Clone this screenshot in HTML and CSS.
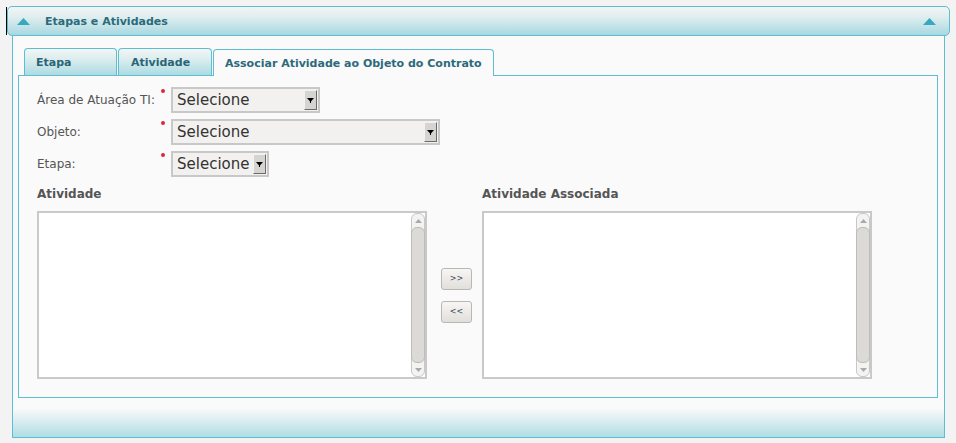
FILE: index.html
```html
<!DOCTYPE html>
<html lang="pt">
<head>
<meta charset="utf-8">
<title>Etapas e Atividades</title>
<link rel="stylesheet" href="styles.css">
</head>
<body>
<div class="page">
  <div class="head-row">
    <span class="caret"></span>
    <div class="header">
      <svg class="tri" width="13" height="7" viewBox="0 0 13 7"><polygon points="0,7 6.5,0 13,7" fill="#38a8be"/></svg>
      <span class="title">Etapas e Atividades</span>
      <svg class="tri" width="13" height="7" viewBox="0 0 13 7"><polygon points="0,7 6.5,0 13,7" fill="#38a8be"/></svg>
    </div>
  </div>
  <div class="panel">
    <div class="tabs">
      <div class="tab tab-1">Etapa</div>
      <div class="tab tab-2">Atividade</div>
      <div class="tab active">Associar Atividade ao Objeto do Contrato</div>
    </div>
    <div class="tabpanel">
      <div class="row">
        <span class="lbl">Área de Atuação TI:</span><span class="req"></span>
        <div class="sel w1"><span class="sel-text">Selecione</span><span class="sel-btn"><svg width="7" height="5" viewBox="0 0 7 5"><polygon points="0,0 7,0 3.5,4" fill="#000"/><rect x="3" y="3" width="1" height="2" fill="#000"/></svg></span></div>
      </div>
      <div class="row">
        <span class="lbl">Objeto:</span><span class="req"></span>
        <div class="sel w2"><span class="sel-text">Selecione</span><span class="sel-btn"><svg width="7" height="5" viewBox="0 0 7 5"><polygon points="0,0 7,0 3.5,4" fill="#000"/><rect x="3" y="3" width="1" height="2" fill="#000"/></svg></span></div>
      </div>
      <div class="row">
        <span class="lbl">Etapa:</span><span class="req"></span>
        <div class="sel w3"><span class="sel-text">Selecione</span><span class="sel-btn"><svg width="7" height="5" viewBox="0 0 7 5"><polygon points="0,0 7,0 3.5,4" fill="#000"/><rect x="3" y="3" width="1" height="2" fill="#000"/></svg></span></div>
      </div>
      <div class="lists">
        <div class="list-title">Atividade</div>
        <div></div>
        <div class="list-title">Atividade Associada</div>
        <div class="listbox">
          <div class="sb">
            <div class="sb-end"><svg width="7" height="4" viewBox="0 0 7 4"><polygon points="0,4 3.5,0 7,4" fill="#a9a9a9"/></svg></div>
            <div class="sb-thumb"></div>
            <div class="sb-end"><svg width="7" height="4" viewBox="0 0 7 4"><polygon points="0,0 7,0 3.5,4" fill="#a9a9a9"/></svg></div>
          </div>
        </div>
        <div class="moves">
          <button class="mv" type="button">&gt;&gt;</button>
          <button class="mv" type="button">&lt;&lt;</button>
        </div>
        <div class="listbox">
          <div class="sb">
            <div class="sb-end"><svg width="7" height="4" viewBox="0 0 7 4"><polygon points="0,4 3.5,0 7,4" fill="#a9a9a9"/></svg></div>
            <div class="sb-thumb"></div>
            <div class="sb-end"><svg width="7" height="4" viewBox="0 0 7 4"><polygon points="0,0 7,0 3.5,4" fill="#a9a9a9"/></svg></div>
          </div>
        </div>
      </div>
    </div>
  </div>
</div>
</body>
</html>
```
FILE: styles.css
```css
body {
  margin: 0;
  background: #f3f3f3;
  font-family: "DejaVu Sans", "Liberation Sans", sans-serif;
}

.page {
  width: 956px;
  padding-top: 6px;
}

.head-row {
  display: flex;
  margin-left: 6px;
  height: 30px;
}

.caret {
  width: 1px;
  background: #000;
  margin: 1px 0;
}

.header {
  width: 943px;
  box-sizing: border-box;
  border: 1px solid #5bbfd1;
  border-radius: 5px;
  background: linear-gradient(#f3f4f4, #e0eeef 35%, #a7d8e1);
  display: flex;
  align-items: center;
  padding: 0 13px 0 9px;
}

.tri {
  display: block;
  margin-top: 1px;
}

.title {
  flex: 1;
  margin-left: 15px;
  font-size: 11px;
  font-weight: bold;
  color: #2c6a7a;
}

.panel {
  margin-left: 12px;
  width: 933px;
  height: 402px;
  box-sizing: border-box;
  border: 1px solid #5bbfd1;
  border-top: none;
  background: linear-gradient(to bottom, #fafafa 0, #fafafa 372px, #b0dde5 100%);
  padding: 12px 6px 0 5px;
}

.tabs {
  display: flex;
  align-items: flex-start;
  gap: 1px;
  height: 28px;
  margin-bottom: -1px;
  padding-left: 6px;
  position: relative;
  z-index: 1;
}

.tab {
  box-sizing: border-box;
  height: 27px;
  border: 1px solid #5bbfd1;
  border-bottom: none;
  border-radius: 4px 4px 0 0;
  background: linear-gradient(#f2f5f5, #dbedee 40%, #acdbe3);
  font-size: 11px;
  font-weight: bold;
  color: #2b6575;
  padding: 1px 11px 0;
  display: flex;
  align-items: center;
}

.tab-1 {
  width: 93px;
}

.tab-2 {
  width: 94px;
  padding-left: 12px;
}

.tab.active {
  margin-top: 1px;
  padding-top: 0;
  background: #fafafa;
  color: #2c6a7a;
}

.tabpanel {
  box-sizing: border-box;
  height: 323px;
  border: 1px solid #5dbfd0;
  background: #fafafa;
  padding: 11px 0 0 18px;
}

.row {
  display: flex;
  align-items: center;
  height: 26px;
  margin-bottom: 6px;
}

.lbl {
  width: 124px;
  font-size: 12px;
  color: #555;
}

.req {
  width: 10px;
  align-self: flex-start;
}

.req::before {
  content: "";
  display: block;
  width: 4px;
  height: 4px;
  margin-top: 2px;
  border-radius: 50%;
  background: #d9283c;
}

.sel {
  box-sizing: border-box;
  height: 26px;
  border: 2px solid #c8c8c8;
  background: #f2f1ef;
  display: flex;
  align-items: center;
}

.w1 { width: 149px; }
.w2 { width: 269px; }
.w3 { width: 98px; }

.sel-text {
  flex: 1;
  padding-left: 4px;
  font-size: 15px;
  color: #333;
}

.sel-btn {
  box-sizing: border-box;
  width: 13px;
  height: 20px;
  margin-right: 1px;
  background: #d6d4d0;
  border: 1px solid;
  border-color: #f2f2f2 #6b6b6b #6b6b6b #f2f2f2;
  display: flex;
  align-items: center;
  justify-content: center;
}

.sel-btn svg {
  display: block;
}

.lists {
  display: grid;
  grid-template-columns: 390px 55px 390px;
  grid-template-rows: 14px 168px;
  row-gap: 10px;
  margin-top: 10px;
}

.list-title {
  font-size: 12px;
  font-weight: bold;
  color: #555;
  line-height: 14px;
}

.listbox {
  box-sizing: border-box;
  border: 2px solid #c9c9c9;
  background: #fff;
  display: flex;
  justify-content: flex-end;
}

.sb {
  box-sizing: border-box;
  width: 14px;
  display: flex;
  flex-direction: column;
  border: 1px solid #c8c8c8;
  border-radius: 6px;
  background: #f3f3f2;
}

.sb-end {
  height: 13px;
  display: flex;
  align-items: center;
  justify-content: center;
}

.sb-end svg {
  display: block;
}

.sb-thumb {
  flex: 1;
  margin: 0 -1px;
  background: #dcdad7;
  border: 1px solid #bebcb9;
  border-radius: 6px;
}

.moves {
  display: flex;
  flex-direction: column;
  align-items: flex-start;
  justify-content: center;
  gap: 11px;
  padding-left: 14px;
}

.mv {
  box-sizing: border-box;
  width: 31px;
  height: 22px;
  padding: 0;
  border: 1px solid #b9b7b3;
  border-radius: 3px;
  background: linear-gradient(#f7f6f4, #e1dfdb);
  font-family: "DejaVu Sans", sans-serif;
  font-size: 8px;
  color: #3a4a5a;
}
```
